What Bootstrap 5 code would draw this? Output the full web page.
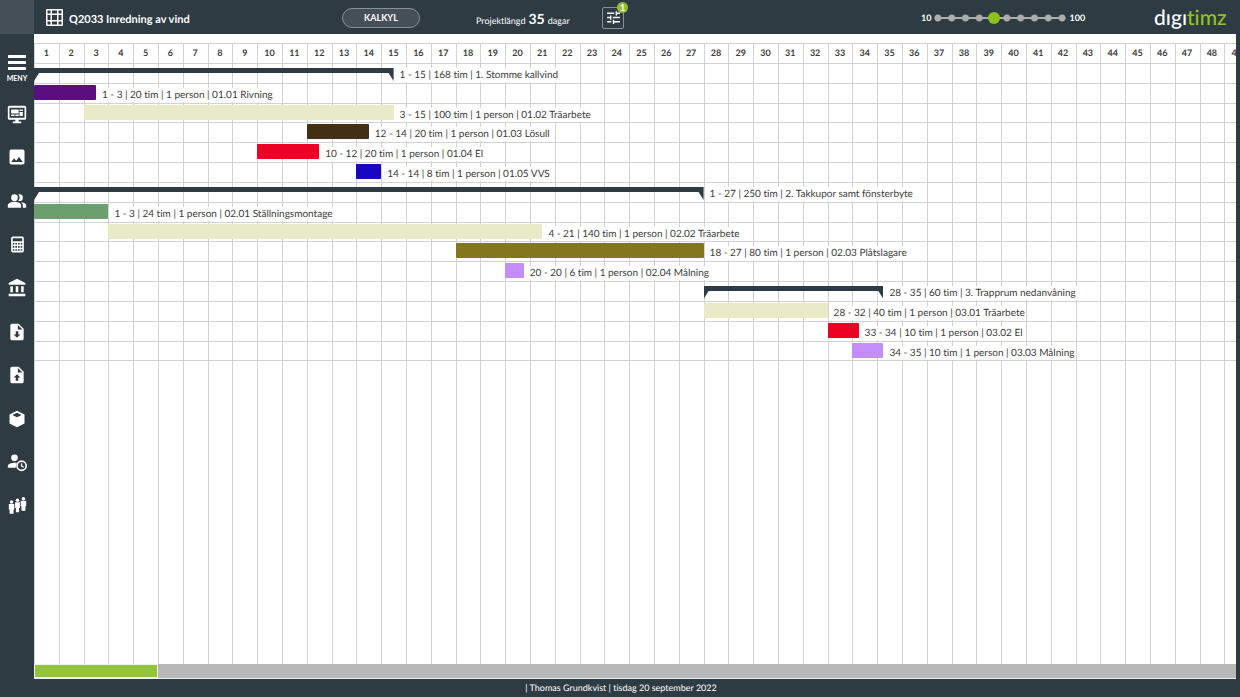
<!DOCTYPE html>
<html lang="sv">
<head>
<meta charset="utf-8">
<meta name="viewport" content="width=device-width, initial-scale=1">
<title>Q2033 Inredning av vind</title>
<link href="https://cdn.jsdelivr.net/npm/bootstrap@5.3.0/dist/css/bootstrap.min.css" rel="stylesheet">
<script src="https://cdn.jsdelivr.net/npm/bootstrap@5.3.0/dist/js/bootstrap.bundle.min.js" defer></script>
<style>
:root{--dark:#2f3b43;--line:#d2d2d2;--day:2vw;--lane:1.6vw}
body{font-family:Lato,"Open Sans",sans-serif;font-size:10px;line-height:14px;background:var(--dark);color:#3b3b3b;text-rendering:geometricPrecision;font-variant-ligatures:none}
svg{display:block;fill:currentColor}
.side{width:34px}
.side .corner{height:34px;background:#444f58}
.side .menu-btn{height:58px;padding-top:10px!important;font-size:7px;line-height:8px;font-weight:700}
.side a.tool{height:6.25vh}
.topbar{height:34px;padding-top:1px;display:grid;grid-template-columns:308fr 134fr 126fr 319fr 233fr 86fr;font-size:9px}
.topbar h1{font-size:11px;line-height:16px;padding-top:4px}
.title-row{gap:6px}
.kalkyl{width:78px;height:20px;font-size:9px;line-height:12px;font-weight:700;background:#444f58;border:1px solid #87909a;color:#fff}
.total{gap:3px}
.days-total{font-size:14px}
.filter{width:22px;height:22px;border:1px solid #87909a!important;border-radius:2px}
.filter .count{top:-6px;right:-5px;width:11px;height:11px;font-size:9px;line-height:11px;background:#8fc02c}
.zoomer{appearance:none;width:138px;height:14px;background:
 linear-gradient(#adadad,#adadad) center/90% 2px no-repeat,
 radial-gradient(circle,#adadad 3px,transparent 4px) 0 0/10% 100% repeat-x}
.zoomer::-webkit-slider-thumb{appearance:none;width:14px;height:14px;border:1px solid transparent;border-radius:50%;background:#8cc21b;background-clip:padding-box}
.zoomer::-moz-range-thumb{width:12px;height:12px;border:1px solid transparent;border-radius:50%;background:#8cc21b;background-clip:padding-box}
.logo{font-size:21px;line-height:24px;font-weight:500}
.logo span{color:#8fc51f}
.board{padding-top:9px;margin-right:4px}
.chart{border-top:1px solid var(--line);background:repeating-linear-gradient(to right,var(--line) 0,var(--line) 1px,transparent 1px,transparent var(--day))}
.day-row{height:20px;border-bottom:1px solid var(--line);font-size:9px;line-height:17px;font-weight:700}
.day-row span{flex:0 0 var(--day);text-align:center}
.lane{height:var(--lane);border-bottom:1px solid var(--line);padding-left:calc(var(--start)*var(--day))}
.lane .bar{flex:none;width:calc(var(--len)*var(--day));height:15px;margin-top:1px;border-radius:1px}
.lane .sum{flex:none;width:calc(var(--len)*var(--day));height:13px;margin-top:4px;background:var(--dark);clip-path:polygon(0 0,100% 0,100% 100%,calc(100% - 5px) 5px,5px 5px,0 100%)}
.lane .txt{font-size:10px;margin-left:5px;padding:0 1px;height:14px;margin-top:4px;background:#fff;white-space:nowrap}
.scroller{height:15px;margin-right:4px;background:#b8b8b8;border-bottom:1px solid #eee}
.scroller .grip{width:10.3%;background:#93c43e;border:1px solid #eef6dd}
.foot{height:18px;font-size:9px;line-height:18px}
</style>
</head>
<body>
<div class="d-flex min-vh-100">
  <nav class="side flex-shrink-0 d-flex flex-column text-white" aria-label="Meny">
    <div class="corner"></div>
    <button class="menu-btn btn p-0 border-0 rounded-0 text-white d-flex flex-column align-items-center justify-content-center" type="button">
      <svg width="18" height="15" viewBox="0 0 18 15"><path d="M1 0h16a1 1 0 0 1 0 3H1a1 1 0 0 1 0-3zM1 6h16a1 1 0 0 1 0 3H1a1 1 0 0 1 0-3zM1 12h16a1 1 0 0 1 0 3H1a1 1 0 0 1 0-3z"/></svg>
      <span class="mt-1">MENY</span>
    </button>
    <div id="tools" class="d-flex flex-column"></div>
  </nav>
  <div class="flex-grow-1 d-flex flex-column" style="min-width:0">
    <header class="topbar align-items-center text-white">
      <div class="title-row d-flex align-items-center text-nowrap ps-2 ms-1">
        <svg width="17" height="17" viewBox="0 0 17 17"><path fill-rule="evenodd" d="M1 0h15a1 1 0 0 1 1 1v15a1 1 0 0 1-1 1H1a1 1 0 0 1-1-1V1a1 1 0 0 1 1-1zM1.500 1.500v3h3v-3zM6 1.500v3h5v-3zM12.500 1.500v3h3v-3zM1.500 6v5h3v-5zM6 6v5h5v-5zM12.500 6v5h3v-5zM1.500 12.500v3h3v-3zM6 12.500v3h5v-3zM12.500 12.500v3h3v-3z"/></svg>
        <h1 class="m-0 fw-bold">Q2033 Inredning av vind</h1>
      </div>
      <div><button class="kalkyl btn rounded-pill p-0 d-block" type="button">KALKYL</button></div>
      <div class="total d-flex align-items-baseline text-nowrap pt-1"><span>Projektlängd</span><span class="days-total fw-bold">35</span><span>dagar</span></div>
      <div><button class="filter btn p-0 text-white position-relative d-flex align-items-center justify-content-center" type="button" aria-label="Filter">
        <svg width="17" height="17" viewBox="0 0 24 24"><path d="M3 17v2h6v-2H3zM3 5v2h10V5H3zm10 16v-2h8v-2h-8v-2h-2v6h2zM7 9v2H3v2h4v2h2V9H7zm14 4v-2H11v2h10zm-6-4h2V7h4V5h-4V3h-2v6z"/></svg>
        <span class="count position-absolute rounded-circle fw-bold">1</span></button></div>
      <div class="d-flex align-items-center text-nowrap fw-bold"><label for="zoom">10</label><input id="zoom" class="zoomer" type="range" min="10" max="100" step="10" value="50"><span>100</span></div>
      <a href="#" class="logo text-white text-decoration-none">dıgı<span>timz</span></a>
    </header>
    <main class="board flex-grow-1 d-flex flex-column bg-white">
      <div class="chart flex-grow-1 overflow-hidden">
        <div class="day-row d-flex" id="days"></div>
        <div id="lanes"></div>
      </div>
    </main>
    <div class="scroller d-flex"><div class="grip"></div></div>
    <footer class="foot text-white text-center me-4 pe-2">| Thomas Grundkvist | tisdag 20 september 2022</footer>
  </div>
</div>
<script>
const tools = [
 ['Översikt','<path fill-rule="evenodd" d="M3 2h18a2 2 0 0 1 2 2v13a2 2 0 0 1-2 2h-7v2h3v2H7v-2h3v-2H3a2 2 0 0 1-2-2V4a2 2 0 0 1 2-2zm0 2.500v12h18v-12zM5 6.500h9v5H5zm10 0h4v2h-4zm0 3h4v5h-4zM5 12.500h4v2H5zm5 0h4v2h-4z"/>',20],
 ['Bilder','<path d="M21 19V5a2 2 0 0 0-2-2H5a2 2 0 0 0-2 2v14a2 2 0 0 0 2 2h14a2 2 0 0 0 2-2zM8.500 13.500l2.500 3 3.500-4.500 4.500 6H5z"/>',20],
 ['Kunder','<path d="M16.670 13.130C18.040 14.060 19 15.320 19 17v3h4v-3c0-2.180-3.570-3.470-6.330-3.870zM15 12a4 4 0 0 0 0-8c-.470 0-.910.100-1.330.240a5.980 5.980 0 0 1 0 7.520c.420.140.860.240 1.330.240zM9 12a4 4 0 1 0 0-8 4 4 0 0 0 0 8zm0 1c-2.670 0-8 1.340-8 4v3h16v-3c0-2.660-5.330-4-8-4z"/>',20],
 ['Kalkyl','<path fill-rule="evenodd" d="M6 2h12a2 2 0 0 1 2 2v16a2 2 0 0 1-2 2H6a2 2 0 0 1-2-2V4a2 2 0 0 1 2-2zm0 2v4h12V4zm0 6v2h2v-2zm3.300 0v2h2v-2zm3.400 0v2h2v-2zm3.300 0v2h2v-2zM6 14v2h2v-2zm3.300 0v2h2v-2zm3.400 0v2h2v-2zm3.300 0v2h2v-2zM6 18v2h2v-2zm3.300 0v2h2v-2zm3.400 0v2h2v-2zm3.300 0v2h2v-2z"/>',19],
 ['Ekonomi','<path d="M4 10v7h3v-7H4zm6.500 0v7h3v-7h-3zM2 22h20v-3H2v3zM17 10v7h3v-7h-3zM12 1L2 6v2h20V6L12 1z"/>',20],
 ['Hämta fil','<path d="M14 2H6a2 2 0 0 0-2 2v16a2 2 0 0 0 2 2h12a2 2 0 0 0 2-2V8l-6-6zm-2 17l-4-4h2.500v-4h3v4H16l-4 4zM13 9V3.500L18.500 9H13z"/>',20],
 ['Skicka fil','<path d="M14 2H6a2 2 0 0 0-2 2v16a2 2 0 0 0 2 2h12a2 2 0 0 0 2-2V8l-6-6zm-.500 13v4h-3v-4H8l4-4 4 4h-2.500zM13 9V3.500L18.500 9H13z"/>',20],
 ['Material','<path fill-rule="evenodd" d="M12 2l9 4.500v11L12 22l-9-4.500v-11zm0 2.500L6.500 7.200 12 10l5.500-2.800z"/>',20],
 ['Tidrapport','<path d="M9 3a4 4 0 1 1 0 8 4 4 0 0 1 0-8zM9 13c1 0 2 .100 3 .400A7 7 0 0 0 10.500 19H1v-2c0-2.700 5-4 8-4z"/><path fill-rule="evenodd" d="M17.500 10a6.500 6.500 0 1 1 0 13 6.500 6.500 0 0 1 0-13zm0 2a4.500 4.500 0 1 0 0 9 4.500 4.500 0 0 0 0-9zM16.700 13.500v3.500l2.800 2 .9-1.200-2.200-1.500v-2.800z"/>',20],
 ['Personal','<circle cx="4.500" cy="7.500" r="2.200"/><path d="M1 10h7v7H7v5.500H2V17H1z"/><circle cx="12" cy="5.500" r="2.200"/><path d="M9 8h6v7h-1v5.500h-4V15H9z"/><circle cx="19.500" cy="3.500" r="2.200"/><path d="M16 6h7v7h-1v5.500h-5V13h-1z"/>',19]
];
document.getElementById('tools').innerHTML = tools.map(([name, shape, s]) =>
 `<a href="#" class="tool text-white d-flex align-items-center justify-content-center" aria-label="${name}"><svg width="${s}" height="${s}" viewBox="0 0 24 24">${shape}</svg></a>`).join('');

// start day, length in days, colour (none = summary of a group), label
const lanes = [
 [0,14.5,'','1 - 15 | 168 tim | 1. Stomme kallvind'],
 [0,2.5,'#5a0f80','1 - 3 | 20 tim | 1 person | 01.01 Rivning'],
 [2,12.5,'#e8eac8','3 - 15 | 100 tim | 1 person | 01.02 Träarbete'],
 [11,2.5,'#432f14','12 - 14 | 20 tim | 1 person | 01.03 Lösull'],
 [9,2.5,'#ec0224','10 - 12 | 20 tim | 1 person | 01.04 El'],
 [13,1,'#1a06c0','14 - 14 | 8 tim | 1 person | 01.05 VVS'],
 [0,27,'','1 - 27 | 250 tim | 2. Takkupor samt fönsterbyte'],
 [0,3,'#6b9f6e','1 - 3 | 24 tim | 1 person | 02.01 Ställningsmontage'],
 [3,17.5,'#e8eac8','4 - 21 | 140 tim | 1 person | 02.02 Träarbete'],
 [17,10,'#82771c','18 - 27 | 80 tim | 1 person | 02.03 Plåtslagare'],
 [19,.75,'#c48dfc','20 - 20 | 6 tim | 1 person | 02.04 Målning'],
 [27,7.25,'','28 - 35 | 60 tim | 3. Trapprum nedanvåning'],
 [27,5,'#e8eac8','28 - 32 | 40 tim | 1 person | 03.01 Träarbete'],
 [32,1.25,'#ec0224','33 - 34 | 10 tim | 1 person | 03.02 El'],
 [33,1.25,'#c48dfc','34 - 35 | 10 tim | 1 person | 03.03 Målning']
];
document.getElementById('lanes').innerHTML = lanes.map(([start, len, colour, text]) =>
 `<div class="lane d-flex align-items-start" style="--start:${start};--len:${len}"><div class="${colour ? 'bar' : 'sum'}"${colour ? ` style="background:${colour}"` : ''}></div><span class="txt">${text}</span></div>`).join('');
document.getElementById('days').innerHTML = Array.from({length: 49}, (_, i) => `<span>${i + 1}</span>`).join('');
</script>
</body>
</html>
